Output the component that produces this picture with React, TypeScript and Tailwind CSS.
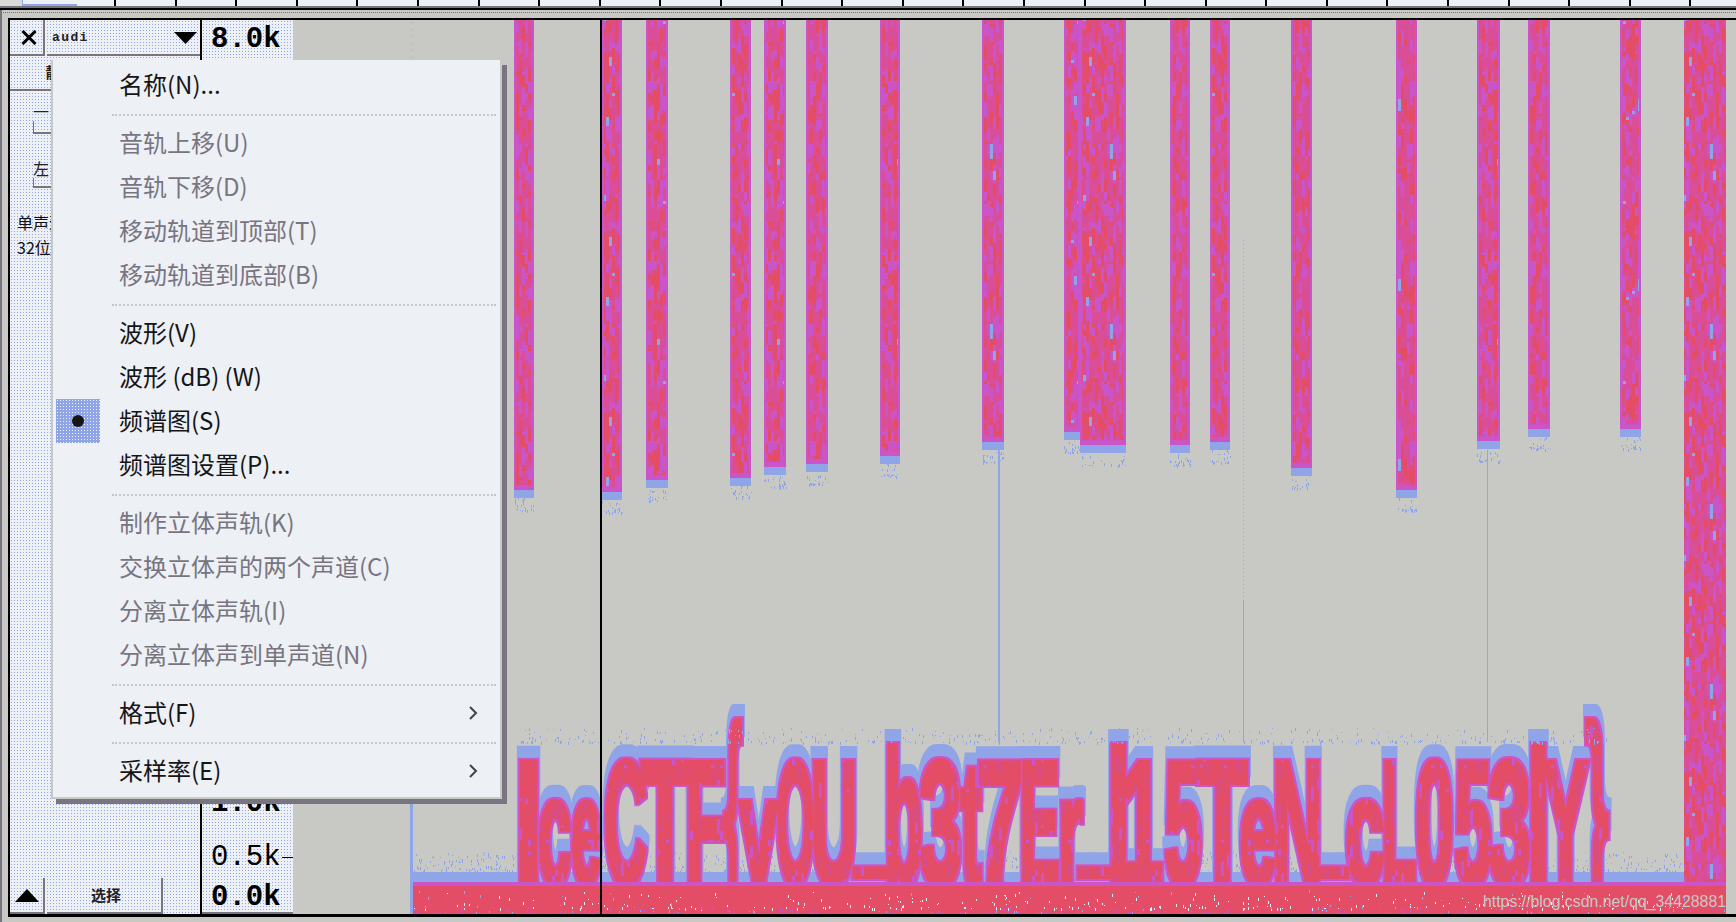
import React from 'react'

const BLUE = '#8fa5e8'
const RED = '#e34d66'
const MAGENTA = '#c955c8'
const GRAY = '#c8c8c5'

// small seeded generator so the noise stays the same on every load
const makeRandom = (seed: number) => () => {
  seed = (seed * 1664525 + 1013904223) % 4294967296
  return seed / 4294967296
}

type Cell = { x: number; y: number; w: number; h: number; fill: string }

const makeTile = (seed: number, w: number, h: number, cellW: number, cellH: number, pick: (n: number) => string) => {
  const rand = makeRandom(seed)
  const cells: Cell[] = []
  for (let x = 0; x < w; x += cellW) {
    let y = 0
    while (y < h) {
      const tall = Math.min(h - y, cellH * (1 + Math.floor(rand() * 5)))
      cells.push({ x, y, w: cellW, h: tall, fill: pick(rand()) })
      y += tall
    }
  }
  return cells
}

const bandTile = makeTile(7, 120, 180, 3, 3, n =>
  n < 0.22 ? MAGENTA : n < 0.68 ? '#d94e97' : n < 0.985 ? RED : BLUE,
)
const letterTile = makeTile(19, 120, 120, 3, 3, n =>
  n < 0.78 ? RED : n < 0.93 ? '#d94e80' : MAGENTA,
)

const speckle = (seed: number, x: number, y: number, w: number, h: number, count: number, fill: string) => {
  const rand = makeRandom(seed)
  const dots: Cell[] = []
  for (let i = 0; i < count; i++) {
    // denser near the lower edge, like the noise floor in the picture
    const r = rand()
    dots.push({
      x: Math.round(x + rand() * w),
      y: Math.round(y + h - r * r * h),
      w: 1,
      h: 1 + Math.floor(rand() * 3),
      fill,
    })
  }
  return dots
}

const bands = [
  [514, 534, 498],
  [602, 622, 500],
  [646, 668, 488],
  [730, 751, 486],
  [764, 786, 475],
  [806, 828, 472],
  [880, 900, 464],
  [982, 1004, 450],
  [1064, 1080, 440],
  [1080, 1126, 453],
  [1170, 1190, 453],
  [1210, 1230, 450],
  [1291, 1312, 476],
  [1396, 1417, 498],
  [1477, 1500, 449],
  [1528, 1550, 437],
  [1620, 1641, 437],
]

const glyphs: [string, number, number][] = [
  ['I', 520, 537], ['c', 540, 569], ['e', 573, 599], ['C', 607, 644], ['T', 644, 686], ['F', 688, 723],
  ['{', 725, 741], ['y', 742, 775], ['O', 779, 812], ['U', 814, 854], ['_', 854, 887], ['b', 887, 920],
  ['3', 922, 959], ['t', 962, 980], ['7', 980, 1020], ['E', 1022, 1057], ['r', 1060, 1081], ['_', 1079, 1111],
  ['l', 1111, 1126], ['1', 1128, 1155], ['5', 1167, 1199], ['T', 1201, 1244], ['e', 1242, 1274], ['N', 1276, 1319],
  ['_', 1319, 1348], ['c', 1348, 1382], ['L', 1384, 1414], ['0', 1418, 1451], ['5', 1457, 1489], ['3', 1491, 1528],
  ['l', 1531, 1546], ['Y', 1546, 1585], ['}', 1587, 1607],
]

const glyphSize = (ch: string) => {
  if (ch === '{' || ch === '}') return 222
  if (ch === 'c' || ch === 'e' || ch === 'y' || ch === 'r') return 150
  if (ch === 'b' || ch === 'l') return 190
  return 175
}

const bandFringe = bands.flatMap(([a, b, end], i) => speckle(31 + i, a, end, b - a, 12, 22, BLUE))
const floorSpeckle = speckle(5, 413, 852, 1271, 22, 1700, BLUE)
const letterSpeckle = glyphs.flatMap(([, a, b], i) => speckle(70 + i, a, 728, b - a, 14, 14, BLUE))
const bottomSpeckle = [
  ...speckle(11, 413, 892, 1271, 16, 260, '#edf0f5'),
  ...speckle(12, 413, 906, 1313, 7, 340, MAGENTA),
  ...speckle(13, 413, 890, 1313, 22, 70, BLUE),
]

const Dots = ({ cells }: { cells: Cell[] }) => (
  <>
    {cells.map((c, i) => (
      <rect key={i} x={c.x} y={c.y} width={c.w} height={c.h} fill={c.fill} />
    ))}
  </>
)

const GlyphRow = () => (
  <g className="font-['Liberation_Sans'] font-bold" fill="url(#letterNoise)" stroke="url(#letterNoise)" strokeWidth={6} filter="url(#halo)">
    {glyphs.map(([ch, a, b], i) => {
      const w = b - a
      const pad = ch === '_' ? 0 : ch === 'I' || ch === 'l' || ch === '1' ? w * 0.3 : w * 0.08
      return (
        <text
          key={i}
          x={a - pad}
          y={ch === '_' ? 855 : 883}
          fontSize={glyphSize(ch)}
          textLength={w + pad * 2}
          lengthAdjust="spacingAndGlyphs"
        >
          {ch}
        </text>
      )
    })}
  </g>
)

const Spectrogram = () => (
  <svg className="block h-full w-full" viewBox="293 20 1443 894">
    <defs>
      <pattern id="bandNoise" width="120" height="180" patternUnits="userSpaceOnUse">
        <Dots cells={bandTile} />
      </pattern>
      <pattern id="letterNoise" width="120" height="120" patternUnits="userSpaceOnUse">
        <Dots cells={letterTile} />
      </pattern>
      <clipPath id="aboveFloor">
        <rect x="293" y="20" width="1443" height="865" />
      </clipPath>
      {/* blue smear above each shape, thin magenta rim */}
      <filter id="halo" filterUnits="userSpaceOnUse" x="480" y="680" width="1180" height="230">
        <feMorphology in="SourceAlpha" operator="dilate" radius="3" result="wide" />
        <feOffset in="wide" dy="-11" result="lifted" />
        <feFlood floodColor={BLUE} />
        <feComposite in2="lifted" operator="in" result="blue" />
        <feMorphology in="SourceAlpha" operator="dilate" radius="1.5" result="rim" />
        <feFlood floodColor={MAGENTA} />
        <feComposite in2="rim" operator="in" result="magenta" />
        <feMerge>
          <feMergeNode in="blue" />
          <feMergeNode in="magenta" />
          <feMergeNode in="SourceGraphic" />
        </feMerge>
      </filter>
    </defs>

    {/* thin vertical traces */}
    <rect x="410" y="804" width="3" height="110" fill={BLUE} />
    <line x1="411.5" y1="22" x2="411.5" y2="804" stroke={BLUE} strokeDasharray="1 6" />
    <rect x="998" y="450" width="2" height="292" fill={BLUE} />
    <line x1="1243.5" y1="240" x2="1243.5" y2="600" stroke={BLUE} strokeDasharray="1 3" />
    <rect x="1243" y="600" width="1" height="142" fill={BLUE} />
    <rect x="1487" y="450" width="1" height="292" fill={BLUE} />

    {/* the tall bursts along the top */}
    {bands.map(([a, b, end], i) => (
      <g key={i}>
        <rect x={a} y={20} width={b - a} height={end - 32} fill="url(#bandNoise)" />
        <rect x={a} y={20} width={2} height={end - 32} fill={MAGENTA} />
        <rect x={b - 2} y={20} width={2} height={end - 32} fill={MAGENTA} />
        <rect x={a} y={end - 13} width={b - a} height={5} fill={MAGENTA} />
        <rect x={a} y={end - 8} width={b - a} height={8} fill={BLUE} />
      </g>
    ))}
    <Dots cells={bandFringe} />
    <rect x="1684" y="20" width="42" height="865" fill="url(#bandNoise)" />

    {/* noise floor */}
    <rect x="413" y="872" width="1271" height="12" fill={BLUE} />
    <Dots cells={floorSpeckle} />

    <g clipPath="url(#aboveFloor)">
      <GlyphRow />
    </g>
    <Dots cells={letterSpeckle} />

    {/* solid floor */}
    <rect x="413" y="882" width="1313" height="4" fill={MAGENTA} />
    <rect x="413" y="886" width="1313" height="28" fill={RED} />
    <Dots cells={bottomSpeckle} />

    <rect x="600" y="20" width="2" height="894" fill="#000" />
    <text x="1483" y="907" textLength="243" lengthAdjust="spacingAndGlyphs" fontSize="16" fill={GRAY} className="font-['Liberation_Sans']">
      https://blog.csdn.net/qq_34428881
    </text>
  </svg>
)

const dither =
  'bg-[#edf0f5] bg-[radial-gradient(circle,#8fa5e8_0.55px,transparent_0.7px)] bg-[length:3px_3px]'

const Ruler = () => (
  <div className="flex h-[6px] bg-[#edf0f5]">
    <div className="w-[22px] shrink-0 bg-[#d8dad8]" />
    <div className="w-[55px] shrink-0 border-b-2 border-l border-[#8fa5e8]" />
    <div className="w-[39px] shrink-0 border-r-2 border-black" />
    {Array.from({ length: 27 }, (_, i) => (
      <div key={i} className="w-[60.6px] shrink-0 border-r-2 border-black" />
    ))}
  </div>
)

const FreqLabel = ({ text, bold, tick }: { text: string; bold?: boolean; tick?: boolean }) => (
  <div className="flex h-[24px] items-center">
    <span className={`ml-[9px] w-[71px] whitespace-nowrap font-['Liberation_Mono'] text-[29px] leading-none ${bold ? 'font-bold' : ''}`}>
      {text}
    </span>
    {tick && <span className="ml-auto h-px w-[11px] bg-black" />}
  </div>
)

const TrackPanel = () => (
  <div className={`flex w-[190px] shrink-0 flex-col font-['Noto_Sans_CJK_SC',sans-serif] ${dither}`}>
    <div className="flex h-[36px] shrink-0">
      <div className="flex w-[35px] shrink-0 items-center justify-center border-r-2 border-b-2 border-[#787580] pl-[4px] pt-[1px]">
        <svg width="16" height="15" viewBox="0 0 16 15">
          <path d="M1.5 1 L14.5 14 M14.5 1 L1.5 14" stroke="#000" strokeWidth="3" />
        </svg>
      </div>
      <div className="ml-[2px] flex flex-1 items-center border-b-2 border-[#787580] pl-[5px] pr-[3px] pt-[2px]">
        <span className="font-['Liberation_Mono'] text-[13px] font-bold tracking-[1.4px] text-[#222]">audi</span>
        <svg className="ml-auto" width="23" height="12" viewBox="0 0 23 12">
          <path d="M0 0 H23 L11.5 12 Z" fill="#000" />
        </svg>
      </div>
    </div>
    <div className="flex h-[35px] shrink-0 items-center justify-center border-b-2 border-[#787580] pr-[104px] text-[15px] font-bold text-[#222]">
      静
    </div>
    <div className="mt-[10px] pl-[23px] text-[16px] leading-[20px] text-[#222]">
      <div>一</div>
      <div className="h-[13px] w-[120px] border-b-2 border-l border-[#787580]" />
      <div className="mt-[24px]">左</div>
      <div className="h-[10px] w-[120px] border-b-2 border-l border-[#787580]" />
    </div>
    <div className="mt-[22px] pl-[7px] text-[16px] leading-[25px] text-[#111]">
      <div>单声道</div>
      <div>32位浮点</div>
    </div>
    <div className="mt-auto flex h-[36px] shrink-0">
      <div className="flex w-[35px] shrink-0 items-center justify-center border-r-2 border-b-2 border-[#787580]">
        <svg width="24" height="13" viewBox="0 0 24 13">
          <path d="M12 0 L24 13 H0 Z" fill="#000" />
        </svg>
      </div>
      <div className="ml-[2px] flex w-[116px] items-center justify-center border-r-2 border-b-2 border-[#787580] pl-[4px] text-[15px] font-bold text-[#222]">
        选择
      </div>
    </div>
  </div>
)

const FreqColumn = () => (
  <div className={`flex w-[91px] shrink-0 flex-col border-b-2 border-[#787580] pb-[3px] text-black ${dither}`}>
    <div className="mt-[7px]">
      <FreqLabel text="8.0k" bold />
    </div>
    <div className="flex-1" />
    <FreqLabel text="1.0k" bold tick />
    <div className="h-[30px]" />
    <FreqLabel text="0.5k" tick />
    <div className="h-[16px]" />
    <FreqLabel text="0.0k" bold />
  </div>
)

const Separator = () => (
  <div className="flex h-[14px] items-center pl-[59px] pr-[4px] pt-[2px]">
    <div className="h-0 w-full border-t-2 border-dotted border-[#c8c8c5]" />
  </div>
)

const MenuItem = ({ label, muted, radio, more }: { label: string; muted?: boolean; radio?: boolean; more?: boolean }) => (
  <div className={`flex h-[44px] items-center text-[24px] leading-none ${muted ? 'text-[#787580]' : 'text-[#151515]'}`}>
    <div className="ml-[3px] flex h-[44px] w-[44px] shrink-0 items-center justify-center">
      {radio && (
        <div className="flex h-full w-full items-center justify-center bg-[#8fa5e8] bg-[radial-gradient(circle,#edf0f5_0.5px,transparent_0.7px)] bg-[length:3px_3px]">
          <div className="h-[12px] w-[12px] rounded-full bg-[#151515]" />
        </div>
      )}
    </div>
    <span className="ml-[19px] whitespace-pre pb-[2px]">{label}</span>
    {more && (
      <svg className="ml-auto mr-[22px]" width="10" height="16" viewBox="0 0 10 16">
        <path d="M2 2 L8 8 L2 14" fill="none" stroke="#444" strokeWidth="2" />
      </svg>
    )}
  </div>
)

const TrackMenu = () => (
  <div className="absolute left-[51px] top-[60px] z-10 flex h-[739px] w-[451px] flex-col border-b-2 border-l-2 border-r-2 border-[#c8c8c5] bg-[#edf0f5] pt-[3px] font-['Noto_Sans_CJK_SC',sans-serif] shadow-[5px_5px_0_#787580]">
    <MenuItem label="名称(N)..." />
    <Separator />
    <MenuItem label="音轨上移(U)" muted />
    <MenuItem label="音轨下移(D)" muted />
    <MenuItem label="移动轨道到顶部(T)" muted />
    <MenuItem label="移动轨道到底部(B)" muted />
    <Separator />
    <MenuItem label="波形(V)" />
    <MenuItem label="波形 (dB) (W)" />
    <MenuItem label="频谱图(S)" radio />
    <MenuItem label="频谱图设置(P)..." />
    <Separator />
    <MenuItem label="制作立体声轨(K)" muted />
    <MenuItem label="交换立体声的两个声道(C)" muted />
    <MenuItem label="分离立体声轨(I)" muted />
    <MenuItem label="分离立体声到单声道(N)" muted />
    <Separator />
    <MenuItem label="格式(F)" more />
    <Separator />
    <MenuItem label="采样率(E)" more />
  </div>
)

const App = () => {
  return (
    <div className="relative flex h-screen w-full flex-col overflow-hidden bg-[#c8c8c5]">
      <Ruler />
      <div className="h-[2px] bg-[#787580]" />
      <div className="h-[2px] bg-black" />
      <div className="h-[8px] pt-[2px]">
        <div className="h-0 border-t border-dotted border-[#787580]" />
      </div>
      <div className="ml-[8px] flex h-[899px] border-b-[3px] border-l-2 border-t-2 border-black">
        <TrackPanel />
        <div className="w-[2px] shrink-0 bg-black" />
        <FreqColumn />
        <div className="min-w-0 flex-1">
          <Spectrogram />
        </div>
      </div>
      <div className="absolute left-0 top-[10px] h-full w-[2px] bg-[#787580]" />
      <TrackMenu />
    </div>
  )
}

export default App
